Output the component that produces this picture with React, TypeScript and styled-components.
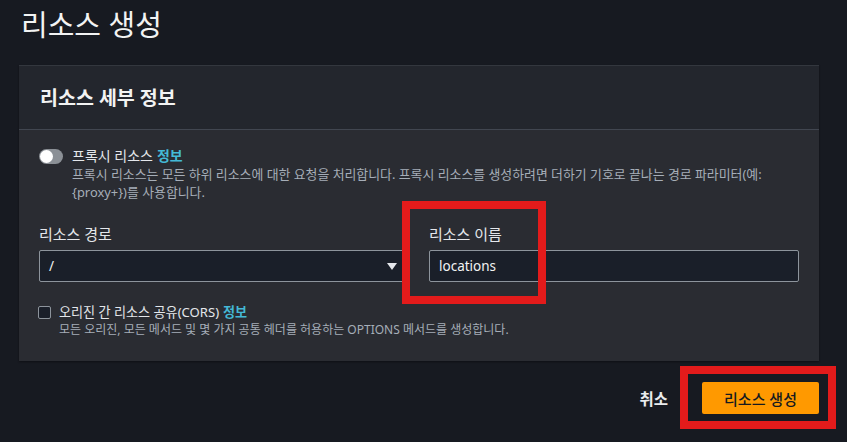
import React from "react";
import styled, { createGlobalStyle } from "styled-components";

const Global = createGlobalStyle`
  html, body { margin: 0; padding: 0; background: #171a21; }
  body { font-family: "Noto Sans", "Noto Sans CJK KR", sans-serif; color: #e4e7eb; }
  * { box-sizing: border-box; }
`;

const Page = styled.div`
  position: relative;
  width: 847px;
  height: 442px;
  overflow: hidden;
  background: #171a21;
`;

const Title = styled.h1`
  margin: 0;
  padding: 5px 0 0 21px;
  font-size: 29px;
  line-height: 40px;
  font-weight: 400;
  color: #f2f3f3;
`;

const Panel = styled.section`
  margin: 20px 0 0 19px;
  width: 800px;
  background: #2a2c32;
  border-top: 1px solid #33373e;
  box-shadow: 0 1px 2px rgba(0, 0, 0, 0.4);
`;

const PanelHeader = styled.header`
  height: 64px;
  display: flex;
  align-items: center;
  padding: 0 21px;
  background: #23262d;
  border-bottom: 1px solid #414650;
`;

const PanelTitle = styled.h2`
  margin: 0;
  font-size: 19.5px;
  font-weight: 700;
  color: #f2f3f3;
  line-height: 24px;
`;

const PanelBody = styled.div`
  padding: 17px 20px 22px 20px;
  display: flex;
  flex-direction: column;
`;

const OptionRow = styled.div<{ $gap: number }>`
  display: flex;
  align-items: flex-start;
  gap: ${(p) => p.$gap}px;
`;

const Toggle = styled.span`
  position: relative;
  flex: none;
  width: 24px;
  height: 15px;
  margin-top: 2px;
  border-radius: 8px;
  background: #8b9096;
  &::after {
    content: "";
    position: absolute;
    left: 1px;
    top: 1px;
    width: 13px;
    height: 13px;
    border-radius: 50%;
    background: #ffffff;
  }
`;

const Checkbox = styled.span`
  flex: none;
  width: 13px;
  height: 13px;
  margin-top: 2.5px;
  margin-left: -1px;
  border: 1px solid #8d949c;
  border-radius: 2px;
  background: #1a1f29;
`;

const OptionText = styled.div`
  display: flex;
  flex-direction: column;
`;

const OptionLabel = styled.div<{ $size: number }>`
  font-size: ${(p) => p.$size}px;
  line-height: 18px;
  color: #e4e7eb;
`;

const InfoLink = styled.span`
  color: #44b9d6;
  font-weight: 700;
  margin-left: 4px;
`;

const Desc = styled.div<{ $size: number }>`
  font-size: ${(p) => p.$size}px;
  line-height: 18px;
  color: #a6aeb8;
  white-space: nowrap;
`;

const Fields = styled.div`
  display: grid;
  grid-template-columns: 1fr 1fr;
  column-gap: 20px;
  margin: 23px 0 21px 0;
`;

const Field = styled.div`
  display: flex;
  flex-direction: column;
  gap: 6px;
`;

const FieldLabel = styled.label`
  font-size: 15px;
  line-height: 20px;
  color: #e4e7eb;
`;

const Box = styled.div`
  height: 32px;
  display: flex;
  align-items: center;
  justify-content: space-between;
  padding: 0 10px 0 9px;
  background: #1a1f29;
  border: 1px solid #8d949c;
  border-radius: 2px;
  font-size: 13.5px;
  color: #f2f3f3;
`;

const Caret = styled.span`
  width: 0;
  height: 0;
  border-left: 5px solid transparent;
  border-right: 5px solid transparent;
  border-top: 7px solid #e4e7eb;
  margin-right: 1px;
`;

const Footer = styled.div`
  width: 800px;
  margin: 21px 0 0 19px;
  display: flex;
  justify-content: flex-end;
  align-items: center;
  gap: 34px;
`;

const Cancel = styled.span`
  font-size: 15.5px;
  font-weight: 700;
  color: #e9ebed;
`;

const Primary = styled.button`
  width: 117px;
  height: 32px;
  border: none;
  border-radius: 2px;
  background: #ff9900;
  color: #16191f;
  font-family: inherit;
  font-size: 15px;
  font-weight: 500;
  padding: 0;
`;

const Highlight = styled.div<{ $x: number; $y: number; $w: number; $h: number }>`
  position: absolute;
  left: ${(p) => p.$x}px;
  top: ${(p) => p.$y}px;
  width: ${(p) => p.$w}px;
  height: ${(p) => p.$h}px;
  border: 8px solid #e31b1b;
  pointer-events: none;
`;

export default function App() {
  return (
    <Page>
      <Global />
      <Title>리소스 생성</Title>
      <Panel>
        <PanelHeader>
          <PanelTitle>리소스 세부 정보</PanelTitle>
        </PanelHeader>
        <PanelBody>
          <OptionRow $gap={9}>
            <Toggle />
            <OptionText>
              <OptionLabel $size={14}>
                프록시 리소스<InfoLink>정보</InfoLink>
              </OptionLabel>
              <Desc $size={12.9}>
                프록시 리소스는 모든 하위 리소스에 대한 요청을 처리합니다. 프록시 리소스를 생성하려면 더하기 기호로 끝나는 경로 파라미터(예:
                <br />
                {"{proxy+})를 사용합니다."}
              </Desc>
            </OptionText>
          </OptionRow>
          <Fields>
            <Field>
              <FieldLabel>리소스 경로</FieldLabel>
              <Box>
                <span>/</span>
                <Caret />
              </Box>
            </Field>
            <Field>
              <FieldLabel>리소스 이름</FieldLabel>
              <Box>locations</Box>
            </Field>
          </Fields>
          <OptionRow $gap={8}>
            <Checkbox />
            <OptionText>
              <OptionLabel $size={13.1}>
                오리진 간 리소스 공유(CORS)<InfoLink>정보</InfoLink>
              </OptionLabel>
              <Desc $size={12}>모든 오리진, 모든 메서드 및 몇 가지 공통 헤더를 허용하는 OPTIONS 메서드를 생성합니다.</Desc>
            </OptionText>
          </OptionRow>
        </PanelBody>
      </Panel>
      <Footer>
        <Cancel>취소</Cancel>
        <Primary>리소스 생성</Primary>
      </Footer>
      <Highlight $x={402} $y={201} $w={144} $h={103} />
      <Highlight $x={680} $y={366} $w={156} $h={63} />
    </Page>
  );
}
